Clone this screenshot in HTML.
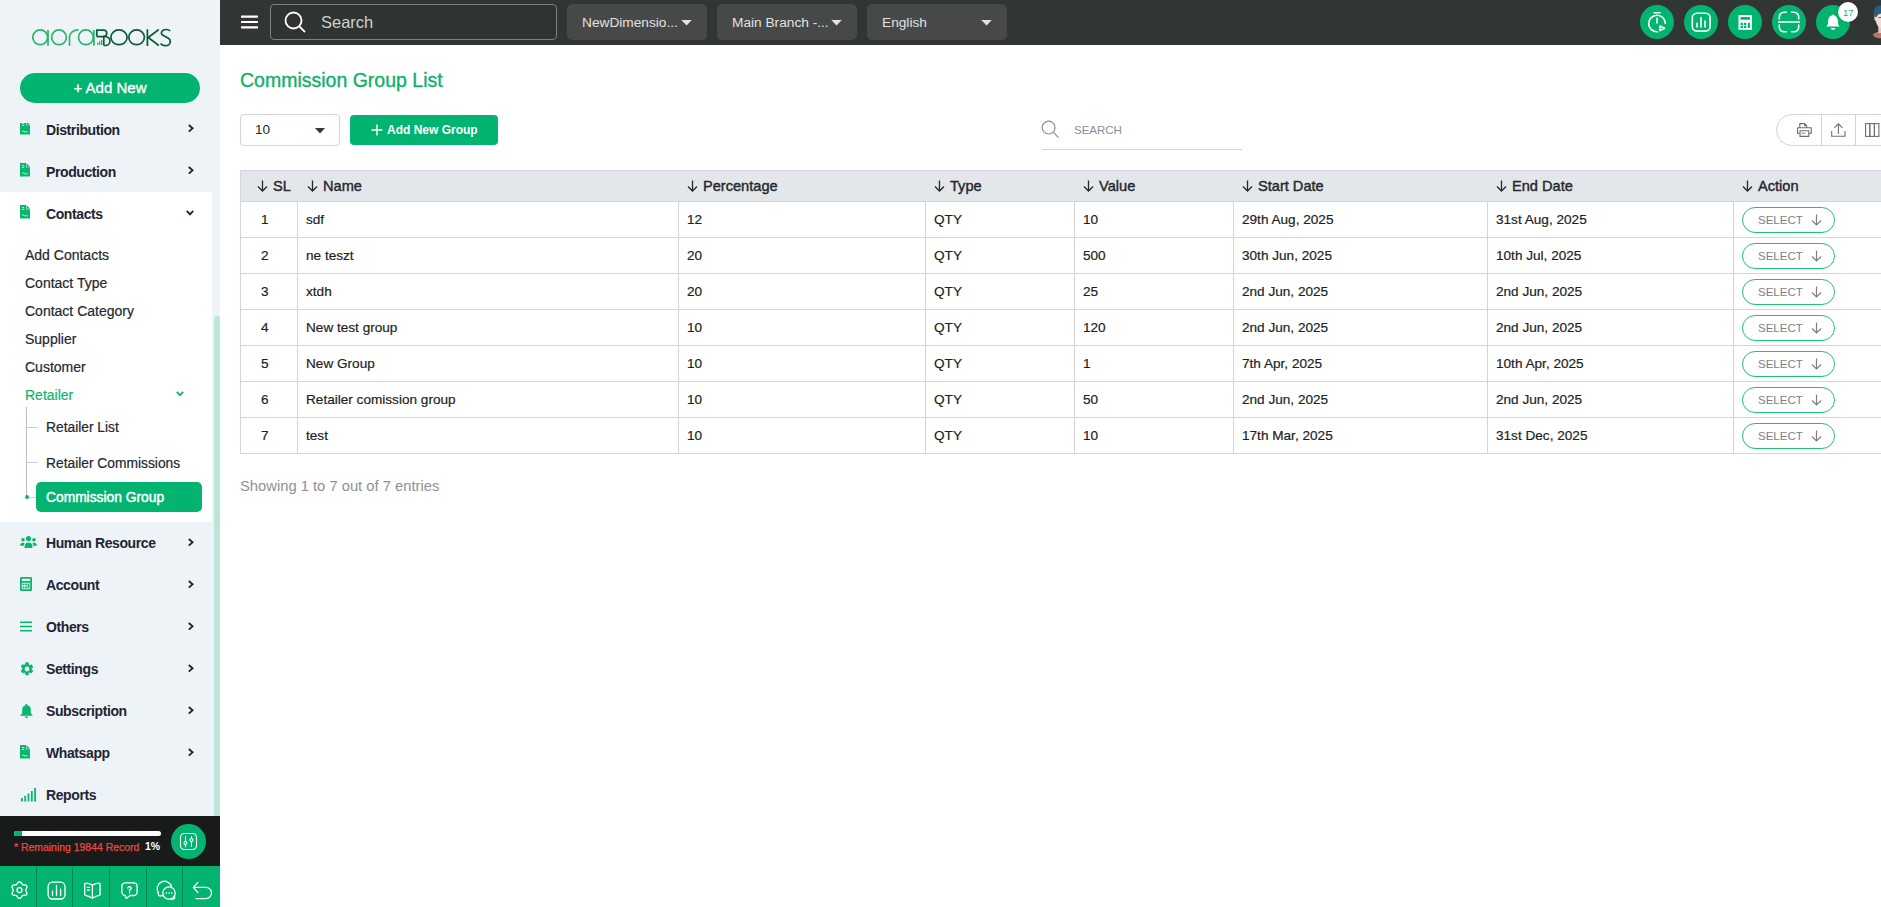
<!DOCTYPE html>
<html><head><meta charset="utf-8">
<style>
*{box-sizing:border-box;margin:0;padding:0}
html,body{width:1881px;height:907px;overflow:hidden;background:#fff;font-family:"Liberation Sans",sans-serif;color:#212529}
.a{position:absolute}
#sb{position:absolute;left:0;top:0;width:220px;height:907px;background:#eef3f7;overflow:hidden}
#hdr{position:absolute;left:220px;top:0;width:1661px;height:45px;background:#313534}
.mt{position:absolute;margin-top:1px;left:46px;font-size:14px;font-weight:bold;color:#222433;line-height:16px;white-space:nowrap;letter-spacing:-0.4px}
.mic{position:absolute;left:20px;width:10px;height:12px}
.chv{position:absolute;left:187px;width:6px;height:9px}
.si{position:absolute;margin-top:0.7px;left:25px;font-size:14px;color:#25272e;line-height:16px;white-space:nowrap;-webkit-text-stroke:0.2px currentColor}
.ssi{position:absolute;left:46px;font-size:13.8px;color:#25272e;line-height:16px;white-space:nowrap;-webkit-text-stroke:0.2px currentColor}
.th{position:absolute;top:170px;height:32px;font-size:14.6px;color:#25272e;line-height:32px;white-space:nowrap;-webkit-text-stroke:0.4px #25272e}
.td{position:absolute;font-size:13.6px;color:#1d1f24;line-height:16px;white-space:nowrap;margin-top:1px;-webkit-text-stroke:0.2px #1d1f24}
.sel{position:absolute;left:1742px;width:93px;height:26px;border:1.5px solid #20c17c;border-radius:13px;font-size:11.5px;color:#7d7f87;line-height:25px;padding-left:15px;white-space:nowrap}
</style></head><body>
<div id="sb">
  <!-- logo -->
  <svg class="a" style="left:30px;top:27px" width="145" height="22" viewBox="0 0 145 22">
    <g fill="none" stroke="#2cb36b" stroke-width="1.7">
      <circle cx="10.2" cy="10.3" r="7.4"/><line x1="18" y1="3" x2="18" y2="18.7"/>
      <circle cx="29" cy="10.3" r="7.4"/>
      <path d="M39.5 18.7 V10.3 A8.5 7.4 0 0 1 48.5 2.9"/>
      <circle cx="55.9" cy="10.3" r="7.4"/><line x1="63.9" y1="3" x2="63.9" y2="18.7"/>
    </g>
    <g fill="#2cb36b"><rect x="67" y="15.6" width="1.3" height="2.4"/><rect x="69" y="14.2" width="1.3" height="3.8"/><rect x="71" y="12.8" width="1.3" height="5.2"/></g>
    <g fill="none" stroke="#0e5a37" stroke-width="1.7">
      <path d="M66.8 9.6 V3.1 H73.5 a3.25 3.25 0 0 1 0 6.5 H66.8"/>
      <path d="M73.8 18.5 V9.6 H75.5 a4.45 4.45 0 0 1 0 8.9 H73.8"/>
      <ellipse cx="89" cy="10.3" rx="8.1" ry="7.4"/>
      <ellipse cx="106.6" cy="10.3" rx="7.8" ry="7.4"/>
      <path d="M117.4 2.3 V18.9 M128.8 2.5 L118.2 10.5 L128.8 18.5"/>
      <path d="M140.2 4 C138 1.8 133.5 2.2 132 4.2 C130.7 6 131.6 7.5 133 8.3 L138.3 11.3 C140.8 12.8 141 15.8 139 17.6 C137 19.3 132.5 19 130.5 16.5"/>
    </g>
  </svg>
  <!-- add new -->
  <div class="a" style="left:20px;top:73px;width:180px;height:30px;border-radius:15px;background:#02b46f;color:#fff;font-size:15px;text-align:center;line-height:30px;-webkit-text-stroke:0.35px #fff">+ Add New</div>
  <!-- menu top -->
  <svg class="a" style="left:20px;top:121px;clip-path:inset(2px 0 0 0)" width="10" height="14" viewBox="0 0 10 14"><path d="M0 0 H6.2 V4.3 H10 V13.6 H0 Z" fill="#0bb56e"/><path d="M6.7 0.2 L10 3.7 H6.7 Z" fill="#0bb56e"/><rect x="1.9" y="1.9" width="2.3" height="0.8" fill="#fff"/><rect x="1.9" y="3.9" width="2.3" height="0.8" fill="#fff"/><path d="M2.2 11 L3.5 9.6 L4.3 10.8 L7.6 10.8" stroke="#fff" stroke-width="0.7" fill="none"/></svg>
<div class="mt" style="top:121px">Distribution</div>
<svg class="a" style="left:187px;top:124.2px" width="8" height="9" viewBox="0 0 8 9"><path d="M1.8 1 L5.6 4.3 L1.8 7.6" stroke="#1f2130" stroke-width="1.8" fill="none"/></svg>
<svg class="a" style="left:20px;top:163px" width="10" height="14" viewBox="0 0 10 14"><path d="M0 0 H6.2 V4.3 H10 V13.6 H0 Z" fill="#0bb56e"/><path d="M6.7 0.2 L10 3.7 H6.7 Z" fill="#0bb56e"/><rect x="1.9" y="1.9" width="2.3" height="0.8" fill="#fff"/><rect x="1.9" y="3.9" width="2.3" height="0.8" fill="#fff"/><path d="M2.2 11 L3.5 9.6 L4.3 10.8 L7.6 10.8" stroke="#fff" stroke-width="0.7" fill="none"/></svg>
<div class="mt" style="top:163px">Production</div>
<svg class="a" style="left:187px;top:166.2px" width="8" height="9" viewBox="0 0 8 9"><path d="M1.8 1 L5.6 4.3 L1.8 7.6" stroke="#1f2130" stroke-width="1.8" fill="none"/></svg>
<div class="a" style="left:0;top:192px;width:212px;height:330px;background:#fff"></div>
<svg class="a" style="left:20px;top:205px" width="10" height="14" viewBox="0 0 10 14"><path d="M0 0 H6.2 V4.3 H10 V13.6 H0 Z" fill="#0bb56e"/><path d="M6.7 0.2 L10 3.7 H6.7 Z" fill="#0bb56e"/><rect x="1.9" y="1.9" width="2.3" height="0.8" fill="#fff"/><rect x="1.9" y="3.9" width="2.3" height="0.8" fill="#fff"/><path d="M2.2 11 L3.5 9.6 L4.3 10.8 L7.6 10.8" stroke="#fff" stroke-width="0.7" fill="none"/></svg>
<div class="mt" style="top:205px">Contacts</div>
<svg class="a" style="left:185.5px;top:209px" width="8" height="8" viewBox="0 0 8 8"><path d="M0.8 1.8 L4 5.3 L7.2 1.8" stroke="#1f2130" stroke-width="1.8" fill="none"/></svg>
<div class="si" style="top:246px">Add Contacts</div>
<div class="si" style="top:274px">Contact Type</div>
<div class="si" style="top:302px">Contact Category</div>
<div class="si" style="top:330px">Supplier</div>
<div class="si" style="top:358px">Customer</div>
<div class="si" style="top:386px;color:#0bb56e">Retailer</div>
<svg class="a" style="left:175.5px;top:390px" width="8" height="8" viewBox="0 0 8 8"><path d="M0.8 1.8 L4 5.1 L7.2 1.8" stroke="#0bb56e" stroke-width="1.8" fill="none"/></svg>
<div class="a" style="left:26px;top:407px;width:1px;height:91px;background:#bfbccf"></div>
<div class="a" style="left:27px;top:426.5px;width:11px;height:1px;background:#cfcddb"></div>
<div class="a" style="left:27px;top:461.5px;width:11px;height:1px;background:#cfcddb"></div>
<div class="a" style="left:27px;top:496.5px;width:11px;height:1px;background:#cfcddb"></div>
<div class="a" style="left:25px;top:495px;width:4px;height:4px;border-radius:2px;background:#0bb56e"></div>
<div class="ssi" style="top:420.3px">Retailer List</div>
<div class="ssi" style="top:455.5px">Retailer Commissions</div>
<div class="a" style="left:36px;top:482px;width:166px;height:30px;border-radius:5px;background:#02b46f"></div>
<div class="ssi" style="top:490.3px;color:#fff;font-size:13.8px;-webkit-text-stroke:0.45px #fff">Commission Group</div>
<svg class="a" style="left:20px;top:536px" width="17" height="12" viewBox="0 0 17 12"><g fill="#0bb56e"><circle cx="8.5" cy="2.6" r="2.6"/><path d="M4.6 12 V10 a3.9 3.6 0 0 1 7.8 0 V12 Z"/><circle cx="3" cy="3.8" r="1.8"/><path d="M0 9.5 a3 2.8 0 0 1 4.6 -2.4 a4.5 4.5 0 0 0 -0.9 2.8 Z"/><circle cx="14" cy="3.8" r="1.8"/><path d="M17 9.5 a3 2.8 0 0 0 -4.6 -2.4 a4.5 4.5 0 0 1 0.9 2.8 Z"/></g></svg>
<div class="mt" style="top:534.3px">Human Resource</div>
<svg class="a" style="left:187px;top:538.2px" width="8" height="9" viewBox="0 0 8 9"><path d="M1.8 1 L5.6 4.3 L1.8 7.6" stroke="#1f2130" stroke-width="1.8" fill="none"/></svg>
<svg class="a" style="left:20px;top:577px" width="12" height="14" viewBox="0 0 12 14"><path fill="#0bb56e" fill-rule="evenodd" d="M1.2 0 H10.8 a1.2 1.2 0 0 1 1.2 1.2 V12.8 a1.2 1.2 0 0 1 -1.2 1.2 H1.2 a1.2 1.2 0 0 1 -1.2 -1.2 V1.2 a1.2 1.2 0 0 1 1.2 -1.2Z M1.8 1.8 V4 H10.2 V1.8Z M1.8 5.8 V12.2 H10.2 V5.8Z"/><g fill="#0bb56e"><rect x="2.6" y="6.6" width="1.8" height="1.8"/><rect x="5.1" y="6.6" width="1.8" height="1.8"/><rect x="7.6" y="6.6" width="1.8" height="4.8"/><rect x="2.6" y="9.6" width="1.8" height="1.8"/><rect x="5.1" y="9.6" width="1.8" height="1.8"/></g></svg>
<div class="mt" style="top:576.3px">Account</div>
<svg class="a" style="left:187px;top:580.2px" width="8" height="9" viewBox="0 0 8 9"><path d="M1.8 1 L5.6 4.3 L1.8 7.6" stroke="#1f2130" stroke-width="1.8" fill="none"/></svg>
<svg class="a" style="left:20px;top:621px" width="12" height="11" viewBox="0 0 12 11"><g fill="#0bb56e"><rect x="0" y="0.5" width="12" height="1.6"/><rect x="0" y="4.7" width="12" height="1.6"/><rect x="0" y="8.9" width="12" height="1.6"/></g></svg>
<div class="mt" style="top:618.3px">Others</div>
<svg class="a" style="left:187px;top:622.2px" width="8" height="9" viewBox="0 0 8 9"><path d="M1.8 1 L5.6 4.3 L1.8 7.6" stroke="#1f2130" stroke-width="1.8" fill="none"/></svg>
<svg class="a" style="left:20px;top:662px" width="14" height="14" viewBox="1.5 1.5 21 21"><path fill="#0bb56e" d="M19.14 12.94a7.07 7.07 0 0 0 .06-.94 7.07 7.07 0 0 0-.06-.94l2.03-1.58a.49.49 0 0 0 .12-.61l-1.92-3.32a.49.49 0 0 0-.59-.22l-2.39.96a7 7 0 0 0-1.62-.94l-.36-2.54A.48.48 0 0 0 13.93 2h-3.84a.48.48 0 0 0-.48.41l-.36 2.54a7.4 7.4 0 0 0-1.62.94l-2.39-.96a.48.48 0 0 0-.59.22L2.73 8.47a.48.48 0 0 0 .12.61l2.03 1.58a7.3 7.3 0 0 0 0 1.88l-2.03 1.58a.49.49 0 0 0-.12.61l1.92 3.32c.12.22.37.29.59.22l2.39-.96c.5.38 1.04.7 1.62.94l.36 2.54c.05.24.24.41.48.41h3.84c.24 0 .44-.17.47-.41l.36-2.54a7 7 0 0 0 1.62-.94l2.39.96c.22.08.47 0 .59-.22l1.92-3.32a.49.49 0 0 0-.12-.61ZM12 15.6A3.6 3.6 0 1 1 15.6 12 3.6 3.6 0 0 1 12 15.6Z"/></svg>
<div class="mt" style="top:660.3px">Settings</div>
<svg class="a" style="left:187px;top:664.2px" width="8" height="9" viewBox="0 0 8 9"><path d="M1.8 1 L5.6 4.3 L1.8 7.6" stroke="#1f2130" stroke-width="1.8" fill="none"/></svg>
<svg class="a" style="left:20px;top:704px" width="13" height="14" viewBox="0 0 13 14"><path fill="#0bb56e" d="M6.5 0 a1.1 1.1 0 0 1 1.1 1.1 V1.5 a4.3 4.3 0 0 1 3.2 4.2 V9.3 L12.6 11.3 V11.8 H0.4 V11.3 L2.2 9.3 V5.7 a4.3 4.3 0 0 1 3.2 -4.2 V1.1 a1.1 1.1 0 0 1 1.1 -1.1Z"/><path fill="#0bb56e" d="M4.8 12.5 h3.4 a1.7 1.5 0 0 1 -3.4 0Z"/></svg>
<div class="mt" style="top:702.3px">Subscription</div>
<svg class="a" style="left:187px;top:706.2px" width="8" height="9" viewBox="0 0 8 9"><path d="M1.8 1 L5.6 4.3 L1.8 7.6" stroke="#1f2130" stroke-width="1.8" fill="none"/></svg>
<svg class="a" style="left:20px;top:745px" width="10" height="14" viewBox="0 0 10 14"><path d="M0 0 H6.2 V4.3 H10 V13.6 H0 Z" fill="#0bb56e"/><path d="M6.7 0.2 L10 3.7 H6.7 Z" fill="#0bb56e"/><rect x="1.9" y="1.9" width="2.3" height="0.8" fill="#fff"/><rect x="1.9" y="3.9" width="2.3" height="0.8" fill="#fff"/><path d="M2.2 11 L3.5 9.6 L4.3 10.8 L7.6 10.8" stroke="#fff" stroke-width="0.7" fill="none"/></svg>
<div class="mt" style="top:744.3px">Whatsapp</div>
<svg class="a" style="left:187px;top:748.2px" width="8" height="9" viewBox="0 0 8 9"><path d="M1.8 1 L5.6 4.3 L1.8 7.6" stroke="#1f2130" stroke-width="1.8" fill="none"/></svg>
<svg class="a" style="left:21px;top:788px" width="16" height="14" viewBox="0 0 16 14"><g fill="#0bb56e"><rect x="0" y="10" width="1.8" height="3.5"/><rect x="3.3" y="7.8" width="1.8" height="5.7"/><rect x="6.6" y="5.5" width="1.8" height="8"/><rect x="9.9" y="3" width="1.8" height="10.5"/><rect x="13.2" y="0" width="1.8" height="13.5"/></g></svg>
<div class="mt" style="top:786.3px">Reports</div>
<div class="a" style="left:0;top:816px;width:220px;height:50px;background:#191a1a"></div>
<div class="a" style="left:14px;top:831px;width:147px;height:5px;border-radius:3px;background:#fff"></div>
<div class="a" style="left:14px;top:831px;width:8px;height:5px;border-radius:3px 0 0 3px;background:#02b46f"></div>
<div class="a" style="left:14px;top:842px;font-size:10.45px;color:#ea4a3f;-webkit-text-stroke:0.25px #ea4a3f;line-height:12px;white-space:nowrap">* Remaining 19844 Record</div>
<div class="a" style="left:145px;top:840px;font-size:10.5px;color:#fff;font-weight:bold;line-height:12px">1%</div>
<div class="a" style="left:171px;top:824px;width:35px;height:35px;border-radius:18px;background:#02b46f"></div>
<svg class="a" style="left:179px;top:832px" width="19" height="19" viewBox="0 0 19 19"><g fill="none" stroke="#fff" stroke-width="1.1"><rect x="1.5" y="1.5" width="16" height="16" rx="4"/><path d="M6.5 4 V9.5 M6.5 12.5 V15 M12.5 4 V6.5 M12.5 9.5 V15"/><circle cx="6.5" cy="11" r="1.5"/><circle cx="12.5" cy="8" r="1.5"/></g></svg>
<div class="a" style="left:0;top:866px;width:220px;height:41px;background:#02b46f"></div>
<div class="a" style="left:36px;top:867px;width:1px;height:40px;background:#05844f"></div>
<div class="a" style="left:72px;top:867px;width:1px;height:40px;background:#05844f"></div>
<div class="a" style="left:109px;top:867px;width:1px;height:40px;background:#05844f"></div>
<div class="a" style="left:146px;top:867px;width:1px;height:40px;background:#05844f"></div>
<div class="a" style="left:182px;top:867px;width:1px;height:40px;background:#05844f"></div>
<svg class="a" style="left:0;top:866px" width="220" height="41" viewBox="0 0 220 41"><g fill="none" stroke="#fff" stroke-width="1.3" stroke-linecap="round" stroke-linejoin="round">
<path d="M25.80 24.10 L25.84 24.43 L25.96 24.78 L26.13 25.15 L26.34 25.55 L26.55 25.99 L26.74 26.45 L26.86 26.93 L26.91 27.40 L26.85 27.85 L26.69 28.25 L26.42 28.59 L26.06 28.87 L25.63 29.06 L25.15 29.19 L24.66 29.26 L24.18 29.30 L23.72 29.32 L23.32 29.35 L22.96 29.42 L22.65 29.56 L22.38 29.76 L22.14 30.03 L21.91 30.37 L21.66 30.75 L21.39 31.15 L21.08 31.54 L20.73 31.89 L20.35 32.16 L19.93 32.34 L19.50 32.40 L19.07 32.34 L18.65 32.16 L18.27 31.89 L17.92 31.54 L17.61 31.15 L17.34 30.75 L17.09 30.37 L16.86 30.03 L16.62 29.76 L16.35 29.56 L16.04 29.42 L15.68 29.35 L15.28 29.32 L14.82 29.30 L14.34 29.26 L13.85 29.19 L13.37 29.06 L12.94 28.87 L12.58 28.59 L12.31 28.25 L12.15 27.85 L12.09 27.40 L12.14 26.93 L12.26 26.45 L12.45 25.99 L12.66 25.55 L12.87 25.15 L13.04 24.78 L13.16 24.43 L13.20 24.10 L13.16 23.77 L13.04 23.42 L12.87 23.05 L12.66 22.65 L12.45 22.21 L12.26 21.75 L12.14 21.27 L12.09 20.80 L12.15 20.35 L12.31 19.95 L12.58 19.61 L12.94 19.33 L13.37 19.14 L13.85 19.01 L14.34 18.94 L14.82 18.90 L15.28 18.88 L15.68 18.85 L16.04 18.78 L16.35 18.64 L16.62 18.44 L16.86 18.17 L17.09 17.83 L17.34 17.45 L17.61 17.05 L17.92 16.66 L18.27 16.31 L18.65 16.04 L19.07 15.86 L19.50 15.80 L19.93 15.86 L20.35 16.04 L20.73 16.31 L21.08 16.66 L21.39 17.05 L21.66 17.45 L21.91 17.83 L22.14 18.17 L22.38 18.44 L22.65 18.64 L22.96 18.78 L23.32 18.85 L23.72 18.88 L24.18 18.90 L24.66 18.94 L25.15 19.01 L25.63 19.14 L26.06 19.33 L26.42 19.61 L26.69 19.95 L26.85 20.35 L26.91 20.80 L26.86 21.27 L26.74 21.75 L26.55 22.21 L26.34 22.65 L26.13 23.05 L25.96 23.42 L25.84 23.77Z"/><circle cx="19.5" cy="24.1" r="2.5"/>
<rect x="48.1" y="16.1" width="16.9" height="16.9" rx="4.5"/><path d="M52.5 25.1 V29.5 M56.5 19.3 V29.5 M60.6 23.2 V29.5"/>
<path d="M92.4 19.1 C90 17.8 87.5 17.2 85.6 17.2 Q84.7 17.2 84.7 18.1 V28.6 Q84.7 29.2 85.5 29.3 C88 29.6 90.3 30.8 92.4 32.2 C94.5 30.8 96.8 29.6 99.3 29.3 Q100.1 29.2 100.1 28.6 V18.1 Q100.1 17.2 99.2 17.2 C97.3 17.2 94.8 17.8 92.4 19.1Z M92.4 19.1 V32.2"/>
<path d="M87.2 21.4 H89.6 M87.2 24.1 H89.6" stroke-width="1.1"/>
<path d="M125.4 16.8 H133.6 a3.5 3.5 0 0 1 3.5 3.5 V26 a3.5 3.5 0 0 1 -3.5 3.5 H130.2 L126.3 32.4 L125 29.5 H125.4 a3.5 3.5 0 0 1 -3.5 -3.5 V20.3 a3.5 3.5 0 0 1 3.5 -3.5Z"/>
<path d="M127.9 22.2 a1.6 1.6 0 1 1 2.4 1.4 c-.6 .3 -.8 .7 -.8 1.3 V25.2"/><path d="M129.5 26.9 V27" stroke-width="1.4"/>
<path d="M158.5 26.8 A7.3 7.3 0 1 1 171.6 21"/><path d="M158.3 26.5 C158.2 28 158.1 29.5 159.3 29.8 C160.5 30.1 162 29.8 163.3 29.5"/>
<circle cx="169" cy="27" r="6.2"/><path d="M174.5 29.8 C174.8 31.2 175 32.5 174 32.8 C173 33.1 171.8 33 170.5 33"/>
<path d="M166.3 27 h.1 M169 27 h.1 M171.7 27 h.1" stroke-width="1.5"/>
<path d="M197.8 16.4 L193.4 21.4 L197.8 26.6"/><path d="M193.6 21.4 H205.9 a5.6 5.6 0 0 1 0 11.2 H195.9"/>
</g></svg>
<div class="a" style="left:212px;top:0;width:8px;height:816px;background:#eef3f7"></div>
<div class="a" style="left:214px;top:316px;width:6px;height:500px;border-radius:3px 3px 0 0;background:#bde6d9"></div>
</div>
<div id="hdr">
  <svg class="a" style="left:21px;top:15px" width="17" height="14" viewBox="0 0 17 14"><g fill="#fff"><rect x="0" y="0.5" width="17" height="2.2" rx="0.5"/><rect x="0" y="5.9" width="17" height="2.2" rx="0.5"/><rect x="0" y="11.3" width="17" height="2.2" rx="0.5"/></g></svg>
  <div class="a" style="left:50px;top:4px;width:287px;height:36px;border:1px solid #76857f;border-radius:4px;background:#2f3332"></div>
  <svg class="a" style="left:64px;top:11px" width="23" height="22" viewBox="0 0 23 22"><circle cx="9.5" cy="9.5" r="8" fill="none" stroke="#fff" stroke-width="1.8"/><path d="M15.3 15.3 L21 21" stroke="#fff" stroke-width="1.8"/></svg>
  <div class="a" style="left:101px;top:13px;font-size:16.5px;color:#d0d0d0;line-height:19px">Search</div>
  <div class="a" style="left:347px;top:4px;width:140px;height:36px;border-radius:5px;background:#464948"></div>
  <div class="a" style="left:362px;top:15px;font-size:13.7px;color:#e2e2e2;line-height:16px">NewDimensio...</div>
  <svg class="a" style="left:461px;top:19px" width="11" height="7" viewBox="0 0 11 7"><path d="M0.3 1 H10.8 L5.55 6.5Z" fill="#e2e2e2"/></svg>
  <div class="a" style="left:497px;top:4px;width:140px;height:36px;border-radius:5px;background:#464948"></div>
  <div class="a" style="left:512px;top:15px;font-size:13.7px;color:#e2e2e2;line-height:16px">Main Branch -...</div>
  <svg class="a" style="left:611px;top:19px" width="11" height="7" viewBox="0 0 11 7"><path d="M0.3 1 H10.8 L5.55 6.5Z" fill="#e2e2e2"/></svg>
  <div class="a" style="left:647px;top:4px;width:140px;height:36px;border-radius:5px;background:#464948"></div>
  <div class="a" style="left:662px;top:15px;font-size:13.7px;color:#e2e2e2;line-height:16px">English</div>
  <svg class="a" style="left:761px;top:19px" width="11" height="7" viewBox="0 0 11 7"><path d="M0.3 1 H10.8 L5.55 6.5Z" fill="#e2e2e2"/></svg>
  <div class="a" style="left:1420px;top:5px;width:34px;height:34px;border-radius:17px;background:#02b46f"></div>
  <div class="a" style="left:1464px;top:5px;width:34px;height:34px;border-radius:17px;background:#02b46f"></div>
  <div class="a" style="left:1508px;top:5px;width:34px;height:34px;border-radius:17px;background:#02b46f"></div>
  <div class="a" style="left:1552px;top:5px;width:34px;height:34px;border-radius:17px;background:#02b46f"></div>
  <div class="a" style="left:1596px;top:5px;width:34px;height:34px;border-radius:17px;background:#02b46f"></div>
  <svg class="a" style="left:1426px;top:11px" width="22" height="22" viewBox="0 0 22 22"><g fill="none" stroke="#fff" stroke-width="1.6" stroke-linecap="round" stroke-linejoin="round"><path d="M8 1.8 H14"/><path d="M11 7.2 V12"/><path d="M11.5 20.8 A8.3 8.3 0 1 1 19.3 12.4"/><path d="M14 15 V19.6 L18.6 17.3 Z"/></g></svg>
  <svg class="a" style="left:1470px;top:11px" width="22" height="22" viewBox="0 0 22 22"><g fill="none" stroke="#fff" stroke-width="1.6" stroke-linecap="round"><rect x="2.3" y="2.3" width="17.8" height="17.8" rx="4.5"/><path d="M7 12.2 V16 M11 6.5 V16 M15 10 V16"/></g></svg>
  <svg class="a" style="left:1514px;top:11px" width="22" height="22" viewBox="0 0 22 22"><path fill="#fff" fill-rule="evenodd" d="M4.5 3.9 H18 V18.7 H4.5Z M6.5 5.9 V8.7 H15.9 V5.9Z M6.5 11.8 V14.2 H9 V11.8Z M10 11.8 V14.2 H12.4 V11.8Z M13.8 11.8 V17 H15.9 V11.8Z M6.5 14.9 V17 H9 V14.9Z M10 14.9 V17 H12.4 V14.9Z"/></svg>
  <svg class="a" style="left:1558px;top:11px" width="22" height="22" viewBox="0 0 22 22"><g fill="none" stroke="#fff" stroke-width="1.6" stroke-linecap="round"><path d="M1.3 8 V6 a4.8 4.8 0 0 1 4.8 -4.8 H8.3 M13.7 1.2 H15.9 a4.8 4.8 0 0 1 4.8 4.8 V8 M20.7 14 V16 a4.8 4.8 0 0 1 -4.8 4.8 H13.7 M8.3 20.8 H6.1 a4.8 4.8 0 0 1 -4.8 -4.8 V14"/><path d="M-0.5 11 H22.5"/></g></svg>
  <svg class="a" style="left:1602px;top:11px" width="22" height="22" viewBox="0 0 22 22"><g fill="#fff"><path d="M11 3.4 c.5 0 .8 .4 .9 .9 C14.2 5 15.6 6.9 15.8 9.3 L16.1 12.8 c.1 1 .7 1.9 1.6 2.8 H4.3 c.9 -.9 1.5 -1.8 1.6 -2.8 L6.2 9.3 C6.4 6.9 7.8 5 10.1 4.3 c.1 -.5 .4 -.9 .9 -.9Z"/><path d="M8.8 16.9 h4.4 a2.2 1.9 0 0 1 -4.4 0Z"/></g></svg>
  <div class="a" style="left:1618px;top:2px;width:20px;height:20px;border-radius:10px;background:#fff;box-shadow:0 0 2px rgba(0,0,0,.3);font-size:9.5px;color:#1bb06c;text-align:center;line-height:22.5px;padding-left:0.5px">17</div>
  <svg class="a" style="left:1652px;top:0px" width="9" height="45" viewBox="0 0 9 45"><path d="M0.7 35 C2 32.5 5 31.8 9 31.8 V38.3 C5 38.3 2 37.5 0.7 35Z" fill="#b47a62"/><rect x="6.3" y="26" width="2.7" height="7" fill="#e6c9bd"/><path d="M2.5 15 C3 13.5 5 13 9 13.2 V28 C6.5 27.5 4.5 24.5 3.8 21 C2.7 20.5 2 18.5 2.5 17Z" fill="#f3dcd2"/><path d="M2 13 C1.8 8 4 5.5 9 5.5 V13.5 C7.5 13.5 5.8 14.2 4.3 17.3 L3 17 C2.5 15.5 2.2 14.5 2 13Z" fill="#2d5a80"/><path d="M6.5 17.5 H9" stroke="#3a4a55" stroke-width="0.8"/></svg>
</div>
<div id="content">
<div class="a" style="left:240px;top:69px;font-size:19.5px;color:#11b06b;-webkit-text-stroke:0.35px #11b06b;line-height:22px;white-space:nowrap">Commission Group List</div>
<div class="a" style="left:240px;top:114px;width:100px;height:32px;border:1px solid #d3d1e2;border-radius:4px;background:#fff"></div>
<div class="a" style="left:255px;top:122px;font-size:13.5px;color:#25272e;line-height:16px">10</div>
<svg class="a" style="left:315px;top:128px" width="10" height="6" viewBox="0 0 10 6"><path d="M0 0 H10 L5 5.5Z" fill="#2f3a36"/></svg>
<div class="a" style="left:350px;top:115px;width:148px;height:30px;border-radius:4px;background:#02b46f"></div>
<svg class="a" style="left:370.5px;top:124px" width="12" height="12" viewBox="0 0 12 12"><path d="M6 0.5 V11.5 M0.5 6 H11.5" stroke="#fff" stroke-width="1.4"/></svg>
<div class="a" style="left:387px;top:122px;font-size:12px;color:#fff;font-weight:bold;line-height:16px;white-space:nowrap">Add New Group</div>
<svg class="a" style="left:1041px;top:120px" width="19" height="19" viewBox="0 0 19 19"><circle cx="7.6" cy="7.6" r="6.4" fill="none" stroke="#8a8d99" stroke-width="1.2"/><path d="M12.3 12.3 L17.6 17.6" stroke="#8a8d99" stroke-width="1.2"/></svg>
<div class="a" style="left:1074px;top:123px;font-size:11.5px;color:#8a8d99;line-height:14px">SEARCH</div>
<div class="a" style="left:1042px;top:149px;width:200px;height:1px;background:#d3d1e2"></div>
<div class="a" style="left:1776px;top:114px;width:140px;height:32px;border:1px solid #d3d1e2;border-radius:16px 0 0 16px;background:#fff"></div>
<div class="a" style="left:1821px;top:114px;width:1px;height:32px;background:#d3d1e2"></div>
<div class="a" style="left:1855px;top:114px;width:1px;height:32px;background:#d3d1e2"></div>
<svg class="a" style="left:1797px;top:123px" width="15" height="14" viewBox="0 0 15 14"><g fill="none" stroke="#6c6f7a" stroke-width="1.1" stroke-linejoin="round"><path d="M2.8 4.8 V0.6 H7.6 L9.6 2.6 V4.8"/><path d="M7.6 0.6 V2.6 H9.6"/><path d="M2.5 10.5 H0.6 V4.8 H14.2 V10.5 H12.3"/><rect x="3" y="7.8" width="8.8" height="5.6"/><path d="M4.5 10.2 H8.5" stroke-width="0.8"/></g></svg>
<svg class="a" style="left:1831px;top:123px" width="15" height="14" viewBox="0 0 15 14"><g fill="none" stroke="#6c6f7a" stroke-width="1.1"><path d="M7.4 11 V0.8 M3.3 4.8 L7.4 0.8 L11.5 4.8"/><path d="M0.7 8 V13.3 H14 V8"/></g></svg>
<svg class="a" style="left:1865px;top:123px" width="16" height="14" viewBox="0 0 16 14"><g fill="none" stroke="#6c6f7a" stroke-width="1.1"><rect x="0.6" y="0.6" width="4.2" height="12.8"/><rect x="4.8" y="0.6" width="4.6" height="12.8"/><rect x="9.4" y="0.6" width="4.5" height="12.8"/></g></svg>
<div class="a" style="left:240px;top:170px;width:1641px;height:32px;background:#e3e7ea;border-top:1px solid #d5d3e3;border-left:1px solid #d5d3e3;border-bottom:1px solid #d5d3e3"></div>
<svg class="a" style="left:257px;top:180px" width="11" height="12" viewBox="0 0 11 12"><path d="M5.5 0.5 V11 M1 6.5 L5.5 11 L10 6.5" fill="none" stroke="#25272e" stroke-width="1.3"/></svg>
<div class="th" style="left:273px">SL</div>
<svg class="a" style="left:307px;top:180px" width="11" height="12" viewBox="0 0 11 12"><path d="M5.5 0.5 V11 M1 6.5 L5.5 11 L10 6.5" fill="none" stroke="#25272e" stroke-width="1.3"/></svg>
<div class="th" style="left:323px">Name</div>
<svg class="a" style="left:687px;top:180px" width="11" height="12" viewBox="0 0 11 12"><path d="M5.5 0.5 V11 M1 6.5 L5.5 11 L10 6.5" fill="none" stroke="#25272e" stroke-width="1.3"/></svg>
<div class="th" style="left:703px">Percentage</div>
<svg class="a" style="left:934px;top:180px" width="11" height="12" viewBox="0 0 11 12"><path d="M5.5 0.5 V11 M1 6.5 L5.5 11 L10 6.5" fill="none" stroke="#25272e" stroke-width="1.3"/></svg>
<div class="th" style="left:950px">Type</div>
<svg class="a" style="left:1083px;top:180px" width="11" height="12" viewBox="0 0 11 12"><path d="M5.5 0.5 V11 M1 6.5 L5.5 11 L10 6.5" fill="none" stroke="#25272e" stroke-width="1.3"/></svg>
<div class="th" style="left:1099px">Value</div>
<svg class="a" style="left:1242px;top:180px" width="11" height="12" viewBox="0 0 11 12"><path d="M5.5 0.5 V11 M1 6.5 L5.5 11 L10 6.5" fill="none" stroke="#25272e" stroke-width="1.3"/></svg>
<div class="th" style="left:1258px">Start Date</div>
<svg class="a" style="left:1496px;top:180px" width="11" height="12" viewBox="0 0 11 12"><path d="M5.5 0.5 V11 M1 6.5 L5.5 11 L10 6.5" fill="none" stroke="#25272e" stroke-width="1.3"/></svg>
<div class="th" style="left:1512px">End Date</div>
<svg class="a" style="left:1742px;top:180px" width="11" height="12" viewBox="0 0 11 12"><path d="M5.5 0.5 V11 M1 6.5 L5.5 11 L10 6.5" fill="none" stroke="#25272e" stroke-width="1.3"/></svg>
<div class="th" style="left:1758px">Action</div>
<div class="a" style="left:240px;top:237px;width:1641px;height:1px;background:#d5d3e3"></div>
<div class="td" style="left:261px;top:211px">1</div>
<div class="td" style="left:306px;top:211px">sdf</div>
<div class="td" style="left:687px;top:211px">12</div>
<div class="td" style="left:934px;top:211px">QTY</div>
<div class="td" style="left:1083px;top:211px">10</div>
<div class="td" style="left:1242px;top:211px">29th Aug, 2025</div>
<div class="td" style="left:1496px;top:211px">31st Aug, 2025</div>
<div class="sel" style="top:207px">SELECT</div>
<svg class="a" style="left:1811px;top:214px" width="11" height="12" viewBox="0 0 11 12"><path d="M5.5 0.5 V11 M1 6.5 L5.5 11 L10 6.5" fill="none" stroke="#7d7f87" stroke-width="1.2"/></svg>
<div class="a" style="left:240px;top:273px;width:1641px;height:1px;background:#d5d3e3"></div>
<div class="td" style="left:261px;top:247px">2</div>
<div class="td" style="left:306px;top:247px">ne teszt</div>
<div class="td" style="left:687px;top:247px">20</div>
<div class="td" style="left:934px;top:247px">QTY</div>
<div class="td" style="left:1083px;top:247px">500</div>
<div class="td" style="left:1242px;top:247px">30th Jun, 2025</div>
<div class="td" style="left:1496px;top:247px">10th Jul, 2025</div>
<div class="sel" style="top:243px">SELECT</div>
<svg class="a" style="left:1811px;top:250px" width="11" height="12" viewBox="0 0 11 12"><path d="M5.5 0.5 V11 M1 6.5 L5.5 11 L10 6.5" fill="none" stroke="#7d7f87" stroke-width="1.2"/></svg>
<div class="a" style="left:240px;top:309px;width:1641px;height:1px;background:#d5d3e3"></div>
<div class="td" style="left:261px;top:283px">3</div>
<div class="td" style="left:306px;top:283px">xtdh</div>
<div class="td" style="left:687px;top:283px">20</div>
<div class="td" style="left:934px;top:283px">QTY</div>
<div class="td" style="left:1083px;top:283px">25</div>
<div class="td" style="left:1242px;top:283px">2nd Jun, 2025</div>
<div class="td" style="left:1496px;top:283px">2nd Jun, 2025</div>
<div class="sel" style="top:279px">SELECT</div>
<svg class="a" style="left:1811px;top:286px" width="11" height="12" viewBox="0 0 11 12"><path d="M5.5 0.5 V11 M1 6.5 L5.5 11 L10 6.5" fill="none" stroke="#7d7f87" stroke-width="1.2"/></svg>
<div class="a" style="left:240px;top:345px;width:1641px;height:1px;background:#d5d3e3"></div>
<div class="td" style="left:261px;top:319px">4</div>
<div class="td" style="left:306px;top:319px">New test group</div>
<div class="td" style="left:687px;top:319px">10</div>
<div class="td" style="left:934px;top:319px">QTY</div>
<div class="td" style="left:1083px;top:319px">120</div>
<div class="td" style="left:1242px;top:319px">2nd Jun, 2025</div>
<div class="td" style="left:1496px;top:319px">2nd Jun, 2025</div>
<div class="sel" style="top:315px">SELECT</div>
<svg class="a" style="left:1811px;top:322px" width="11" height="12" viewBox="0 0 11 12"><path d="M5.5 0.5 V11 M1 6.5 L5.5 11 L10 6.5" fill="none" stroke="#7d7f87" stroke-width="1.2"/></svg>
<div class="a" style="left:240px;top:381px;width:1641px;height:1px;background:#d5d3e3"></div>
<div class="td" style="left:261px;top:355px">5</div>
<div class="td" style="left:306px;top:355px">New Group</div>
<div class="td" style="left:687px;top:355px">10</div>
<div class="td" style="left:934px;top:355px">QTY</div>
<div class="td" style="left:1083px;top:355px">1</div>
<div class="td" style="left:1242px;top:355px">7th Apr, 2025</div>
<div class="td" style="left:1496px;top:355px">10th Apr, 2025</div>
<div class="sel" style="top:351px">SELECT</div>
<svg class="a" style="left:1811px;top:358px" width="11" height="12" viewBox="0 0 11 12"><path d="M5.5 0.5 V11 M1 6.5 L5.5 11 L10 6.5" fill="none" stroke="#7d7f87" stroke-width="1.2"/></svg>
<div class="a" style="left:240px;top:417px;width:1641px;height:1px;background:#d5d3e3"></div>
<div class="td" style="left:261px;top:391px">6</div>
<div class="td" style="left:306px;top:391px">Retailer comission group</div>
<div class="td" style="left:687px;top:391px">10</div>
<div class="td" style="left:934px;top:391px">QTY</div>
<div class="td" style="left:1083px;top:391px">50</div>
<div class="td" style="left:1242px;top:391px">2nd Jun, 2025</div>
<div class="td" style="left:1496px;top:391px">2nd Jun, 2025</div>
<div class="sel" style="top:387px">SELECT</div>
<svg class="a" style="left:1811px;top:394px" width="11" height="12" viewBox="0 0 11 12"><path d="M5.5 0.5 V11 M1 6.5 L5.5 11 L10 6.5" fill="none" stroke="#7d7f87" stroke-width="1.2"/></svg>
<div class="a" style="left:240px;top:453px;width:1641px;height:1px;background:#d5d3e3"></div>
<div class="td" style="left:261px;top:427px">7</div>
<div class="td" style="left:306px;top:427px">test</div>
<div class="td" style="left:687px;top:427px">10</div>
<div class="td" style="left:934px;top:427px">QTY</div>
<div class="td" style="left:1083px;top:427px">10</div>
<div class="td" style="left:1242px;top:427px">17th Mar, 2025</div>
<div class="td" style="left:1496px;top:427px">31st Dec, 2025</div>
<div class="sel" style="top:423px">SELECT</div>
<svg class="a" style="left:1811px;top:430px" width="11" height="12" viewBox="0 0 11 12"><path d="M5.5 0.5 V11 M1 6.5 L5.5 11 L10 6.5" fill="none" stroke="#7d7f87" stroke-width="1.2"/></svg>
<div class="a" style="left:240px;top:201px;width:1px;height:253px;background:#d5d3e3"></div>
<div class="a" style="left:297px;top:201px;width:1px;height:253px;background:#d5d3e3"></div>
<div class="a" style="left:678px;top:201px;width:1px;height:253px;background:#d5d3e3"></div>
<div class="a" style="left:925px;top:201px;width:1px;height:253px;background:#d5d3e3"></div>
<div class="a" style="left:1074px;top:201px;width:1px;height:253px;background:#d5d3e3"></div>
<div class="a" style="left:1233px;top:201px;width:1px;height:253px;background:#d5d3e3"></div>
<div class="a" style="left:1487px;top:201px;width:1px;height:253px;background:#d5d3e3"></div>
<div class="a" style="left:1733px;top:201px;width:1px;height:253px;background:#d5d3e3"></div>
<div class="a" style="left:240px;top:478.2px;font-size:14.75px;color:#8e9097;line-height:16px;white-space:nowrap">Showing 1 to 7 out of 7 entries</div>
</div>
</body></html>
